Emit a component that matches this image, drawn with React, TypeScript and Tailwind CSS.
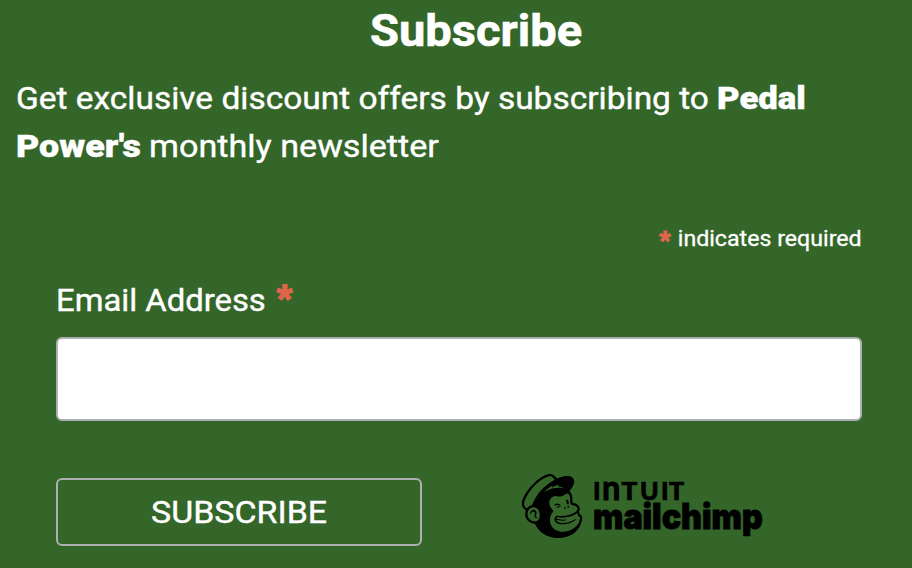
import { SiMailchimp } from "react-icons/si";

export default function App() {
  return (
    <main className="h-[568px] w-[912px] overflow-hidden bg-[#346629] px-4 font-['Roboto',sans-serif] text-[32px] text-white">
      <h2 className="ml-[354px] w-[200px] origin-left scale-x-[1.07] pt-1 text-[44px] leading-[54px] font-bold [-webkit-text-stroke:0.6px_white]">
        Subscribe
      </h2>
      <p className="mt-4 leading-[48px] whitespace-nowrap [-webkit-text-stroke:0.4px_white]">
        <span className="flex">
          <span className="w-[701px] flex-none">
            <span className="inline-block origin-left scale-x-[1.046]">Get exclusive discount offers by subscribing to</span>
          </span>
          <strong className="origin-left scale-x-[1.085] font-black">Pedal</strong>
        </span>
        <span className="flex">
          <span className="w-[133px] flex-none">
            <strong className="inline-block origin-left scale-x-[1.12] font-black">Power's</strong>
          </span>
          <span className="origin-left scale-x-[1.067]">monthly newsletter</span>
        </span>
      </p>
      <form className="mt-[53px] ml-10 w-[806px]">
        <p className="flex justify-end text-[22px] leading-[32px] [-webkit-text-stroke:0.3px_white]">
          <span className="mr-[17px] h-[32px] text-[24px] leading-[34px] font-black text-[#e0654a] [-webkit-text-stroke:1.2px_#e0654a]">*</span>
          <span className="origin-right scale-x-[1.053]">indicates required</span>
        </p>
        <label className="mt-[21px] flex h-[48px] leading-[48px] [-webkit-text-stroke:0.4px_white]">
          <span className="origin-left scale-x-[1.025]">Email Address</span>
          <span className="ml-[16px] text-[33px] leading-[43px] font-black text-[#e0654a] [-webkit-text-stroke:1.8px_#e0654a]">*</span>
        </label>
        <input className="mt-[13px] block h-[84px] w-full rounded-md border-2 border-[#abb0b2] bg-white" />
        <div className="mt-[53px] flex">
          <button
            type="button"
            className="mt-1 h-[68px] w-[366px] rounded-md border-2 border-[#abb0b2] [-webkit-text-stroke:0.4px_white]"
          >
            <span className="inline-block scale-x-[1.06]">SUBSCRIBE</span>
          </button>
          <div className="ml-[98px] flex text-black">
            <SiMailchimp className="size-[64px]" />
            <div className="ml-[9px] pt-[6px]">
              <div className="flex h-[20px] font-['Lato',sans-serif] text-[25px] leading-[20px] font-black [-webkit-text-stroke:0.7px_black]">
                <span className="w-[9px]">I</span>
                <span className="w-[20px] origin-[0_19px] scale-x-[1.3] scale-y-[1.4] font-bold">n</span>
                <span className="w-[18px] scale-x-105">T</span>
                <span className="w-[21px]">U</span>
                <span className="w-[8px]">I</span>
                <span>T</span>
              </div>
              <div className="origin-left scale-x-[0.92] font-['Inter',sans-serif] text-[35px] leading-[33px] font-black [-webkit-text-stroke:0.9px_black]">
                mailchimp
              </div>
            </div>
          </div>
        </div>
      </form>
    </main>
  );
}
